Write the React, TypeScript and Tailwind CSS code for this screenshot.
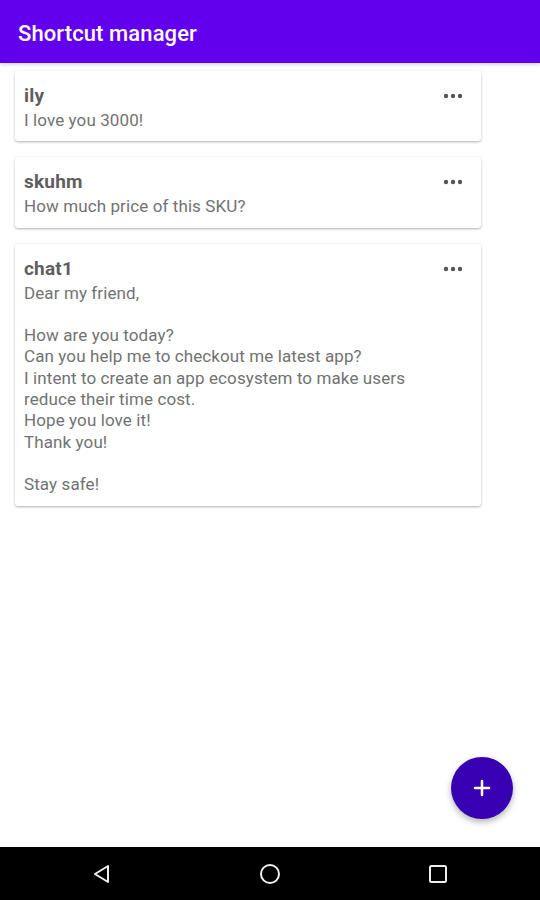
import { Plus } from 'lucide-react'

interface Shortcut {
  id: string
  name: string
  text: string
}

const shortcuts: Shortcut[] = [
  { id: '1', name: 'ily', text: 'I love you 3000!' },
  { id: '2', name: 'skuhm', text: 'How much price of this SKU?' },
  {
    id: '3',
    name: 'chat1',
    text: 'Dear my friend,\n\nHow are you today?\nCan you help me to checkout me latest app?\nI intent to create an app ecosystem to make users\nreduce their time cost.\nHope you love it!\nThank you!\n\nStay safe!',
  },
]

function Dots() {
  return (
    <svg width="20" height="6" viewBox="0 0 20 6" className="text-[#555]">
      <circle cx="3" cy="3" r="2.2" fill="currentColor" />
      <circle cx="10" cy="3" r="2.2" fill="currentColor" />
      <circle cx="17" cy="3" r="2.2" fill="currentColor" />
    </svg>
  )
}

function ShortcutCard({ s }: { s: Shortcut }) {
  return (
    <div className="relative bg-white rounded-[3px] shadow-[0_1px_3px_rgba(0,0,0,0.25),0_1px_1px_rgba(0,0,0,0.08)] pl-[9px] pr-4 pt-[13px] pb-[10px]">
      <div className="flex items-center justify-between">
        <div className="text-[19px] leading-6 font-bold tracking-[0.2px] text-[#5e5e5e]">{s.name}</div>
        <div className="mr-[2px]"><Dots /></div>
      </div>
      <div className="mt-[2px] text-[17px] leading-[21.3px] tracking-[0.1px] text-[#727272] whitespace-pre-line">
        {s.text}
      </div>
    </div>
  )
}

export default function App() {
  return (
    <div className="relative h-[900px] w-[540px] flex flex-col bg-white font-['Roboto',sans-serif] overflow-hidden">
      <header className="h-[63px] shrink-0 bg-[#6200ee] flex items-center px-[18px] pt-[3px] shadow-[0_2px_3px_rgba(0,0,0,0.15)] z-10">
        <h1 className="text-white text-[22px] font-medium tracking-[0.1px]">Shortcut manager</h1>
      </header>

      <main className="flex-1 pt-[8px] pl-[15px] w-[481px]">
        <div className="flex flex-col gap-4">
          {shortcuts.map(s => (
            <ShortcutCard key={s.id} s={s} />
          ))}
        </div>
      </main>

      <button className="absolute left-[451px] top-[757px] w-[62px] h-[62px] rounded-full bg-[#3700b3] flex items-center justify-center shadow-[0_3px_6px_rgba(0,0,0,0.3)]">
        <Plus size={24} strokeWidth={2.5} className="text-white" />
      </button>

      <nav className="h-[53px] shrink-0 bg-black flex items-center">
        <div className="flex-1 flex justify-center">
          <svg width="22" height="22" viewBox="0 0 22 22" className="ml-[-56px]">
            <path d="M17 3 L17 19 L4 11 Z" fill="none" stroke="#eee" strokeWidth="2" strokeLinejoin="round" />
          </svg>
        </div>
        <div className="flex justify-center">
          <svg width="22" height="22" viewBox="0 0 22 22">
            <circle cx="11" cy="11" r="9" fill="none" stroke="#eee" strokeWidth="2" />
          </svg>
        </div>
        <div className="flex-1 flex justify-center">
          <svg width="22" height="22" viewBox="0 0 22 22" className="mr-[-54px]">
            <rect x="3" y="3" width="16" height="16" rx="1.5" fill="none" stroke="#eee" strokeWidth="2" />
          </svg>
        </div>
      </nav>
    </div>
  )
}
